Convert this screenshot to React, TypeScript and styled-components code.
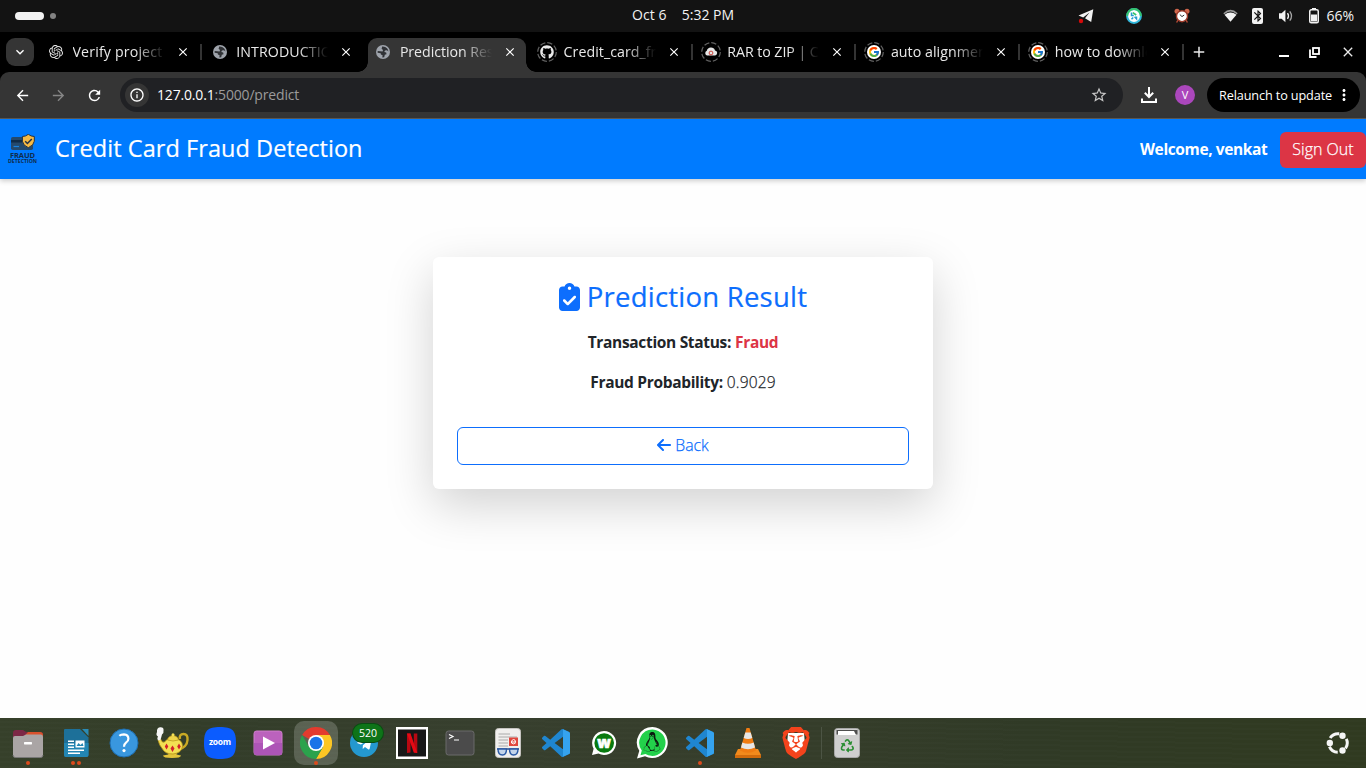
import React from "react";
import styled, { createGlobalStyle, css } from "styled-components";
import {
  MdArrowBack, MdArrowForward, MdRefresh, MdInfoOutline, MdStarBorder, MdClose, MdAdd,
  MdMoreVert, MdExpandMore, MdBluetooth,
} from "react-icons/md";
import { FaClipboardCheck, FaArrowLeft, FaGithub } from "react-icons/fa6";
import { FaTelegramPlane, FaLinux, FaRecycle } from "react-icons/fa";
import { FcGoogle } from "react-icons/fc";
import { SiOpenai, SiBrave } from "react-icons/si";

const GlobalStyle = createGlobalStyle`
  * { box-sizing: border-box; }
  body { margin: 0; background: #fefefe; font-family: "Open Sans", "Noto Sans", sans-serif; }
  svg { display: block; flex: none; }
  h1, h2, p { margin: 0; font-weight: 400; }
  button { font: inherit; margin: 0; }
`;

const Desktop = styled.div`
  width: 1366px;
  height: 768px;
  display: flex;
  flex-direction: column;
  overflow: hidden;
`;

/* ---------- system bar ---------- */
const SystemBar = styled.header`
  flex: none;
  height: 32px;
  background: #131313;
  color: #f2f2f2;
  display: grid;
  grid-template-columns: 632px auto 1fr;
  align-items: center;
`;
const Workspaces = styled.div`
  display: flex;
  align-items: center;
  gap: 6px;
  padding-left: 15px;
`;
const WorkspacePill = styled.span<{ $active?: boolean }>`
  width: ${(p) => (p.$active ? 29 : 6)}px;
  height: ${(p) => (p.$active ? 8 : 6)}px;
  border-radius: 4px;
  background: ${(p) => (p.$active ? "#f2f2f2" : "#828282")};
`;
const Label = styled.span<{ $size?: number; $track?: number; $weight?: number }>`
  font-size: ${(p) => p.$size ?? 14}px;
  letter-spacing: ${(p) => p.$track ?? 0}px;
  font-weight: ${(p) => p.$weight ?? 400};
  white-space: nowrap;
  line-height: 20px;
`;
const Clock = styled.div`
  display: flex;
  gap: 15px;
  margin-top: -2px;
`;
const Tray = styled.div`
  display: flex;
  align-items: center;
  justify-content: flex-end;
  padding-right: 12px;
`;
const TrayItem = styled.span<{ $gap: number }>`
  display: flex;
  margin-right: ${(p) => p.$gap}px;
`;
const BluetoothTile = styled.span`
  width: 11px;
  height: 16px;
  border-radius: 2px;
  background: #f2f2f2;
  color: #131313;
  display: flex;
  align-items: center;
  justify-content: center;
`;

/* ---------- browser ---------- */
const TabStrip = styled.nav`
  flex: none;
  height: 40px;
  background: #000;
  color: #e9e9e9;
  display: flex;
  align-items: flex-start;
  padding: 6px 0 0 6px;
`;
const TabSearch = styled.button`
  width: 28px;
  height: 28px;
  border: 0;
  padding: 0;
  border-radius: 9px;
  background: #353535;
  color: #fff;
  display: flex;
  align-items: center;
  justify-content: center;
  margin-right: 3px;
`;
const TabItem = styled.div<{ $active?: boolean; $sep?: boolean }>`
  position: relative;
  width: 163.7px;
  height: 34px;
  display: flex;
  align-items: center;
  padding: 0 0 6px 9px;
  ${(p) =>
    p.$sep &&
    css`
      &::after {
        content: "";
        position: absolute;
        right: -1px;
        top: 6px;
        width: 2px;
        height: 16px;
        background: #343434;
      }
    `}
  ${(p) =>
    p.$active &&
    css`
      &::before {
        content: "";
        position: absolute;
        inset: 0 2px 0 4px;
        background: #353535;
        border-radius: 9px 9px 0 0;
      }
    `}
`;
const TabFlare = styled.span<{ $side: "left" | "right" }>`
  position: absolute;
  bottom: 0;
  width: 10px;
  height: 10px;
  ${(p) => (p.$side === "left" ? "left: -6px;" : "right: -8px;")}
  background: radial-gradient(circle at ${(p) => (p.$side === "left" ? "0 0" : "100% 0")}, transparent 9.5px, #353535 10px);
`;
const Favicon = styled.span`
  position: relative;
  width: 20px;
  height: 20px;
  display: flex;
  align-items: center;
  justify-content: center;
`;
const LoadRing = styled.svg`
  position: absolute;
  inset: 0;
`;
const TabTitle = styled.span<{ $track: number }>`
  position: relative;
  margin-left: 6.500px;
  width: 92px;
  font-size: 14.2px;
  line-height: 20px;
  letter-spacing: ${(p) => p.$track}px;
  overflow: hidden;
  white-space: nowrap;
  mask-image: linear-gradient(90deg, #000 62px, transparent 92px);
`;
const TabClose = styled.span`
  position: relative;
  margin-left: 11px;
  display: flex;
  color: #fff;
`;
const NewTab = styled.span`
  display: flex;
  padding: 5px 0 0 7px;
`;
const WindowButtons = styled.div`
  margin-left: auto;
  display: flex;
  align-items: center;
  height: 28px;
  gap: 20px;
  padding-right: 10px;
`;

const ToolbarBack = styled.div`
  flex: none;
  background: #000;
`;
const Toolbar = styled.div`
  height: 47px;
  background: #353535;
  border-radius: 9px 9px 0 0;
  border-bottom: 1px solid #5c5a56;
  display: flex;
  align-items: center;
  padding: 0 6px 0 14px;
  color: #fff;
`;
const NavIcon = styled.span<{ $dim?: boolean }>`
  display: flex;
  width: 18px;
  margin-right: 18px;
  color: ${(p) => (p.$dim ? "#868686" : "#fff")};
`;
const AddressBar = styled.div`
  margin-left: -2px;
  width: 1003px;
  height: 34px;
  border-radius: 17px;
  background: #202124;
  display: flex;
  align-items: center;
  padding: 0 15px 0 5px;
`;
const SiteInfo = styled.span`
  width: 24px;
  height: 24px;
  border-radius: 50%;
  background: #353535;
  display: flex;
  align-items: center;
  justify-content: center;
  margin-right: 8px;
`;
const UrlPath = styled.span`
  color: #9b9b9b;
`;
const Bookmark = styled.span`
  margin-left: auto;
  display: flex;
  color: #c7c7c7;
`;
const Downloads = styled.span`
  display: flex;
  margin-left: 17px;
`;
const Avatar = styled.span`
  width: 20px;
  height: 20px;
  border-radius: 50%;
  background: #ab47bc;
  display: flex;
  align-items: center;
  justify-content: center;
  margin: 0 12px 0 17px;
`;
const Relaunch = styled.button`
  width: 153px;
  height: 34px;
  border: 0;
  border-radius: 17px;
  background: #000;
  color: #fff;
  display: flex;
  align-items: center;
  gap: 3px;
  padding: 0 0 0 12px;
`;

/* ---------- web page ---------- */
const AppHeader = styled.header`
  flex: none;
  position: relative;
  height: 60px;
  background: #007bff;
  box-shadow: 0 2px 5px rgba(0, 0, 0, 0.2);
  color: #fff;
  display: flex;
  align-items: center;
  padding-left: 7px;
`;
const AppTitle = styled.h1`
  margin-left: 17px;
  margin-bottom: 2px;
  font-size: 23.5px;
  line-height: 30px;
  letter-spacing: 0.06px;
  white-space: nowrap;
  -webkit-text-stroke: 0.2px;
`;
const Welcome = styled.span`
  margin-left: auto;
  width: 128px;
  margin-right: 12px;
  font-size: 15.5px;
  font-weight: 700;
  letter-spacing: -0.38px;
  white-space: nowrap;
`;
const SignOut = styled.button`
  width: 86px;
  height: 36px;
  margin-top: 1px;
  border: 0;
  padding: 0 0 1px;
  border-radius: 6px;
  background: #dc3545;
  color: #fff;
  font-size: 16px;
  font-weight: 300;
  -webkit-text-stroke: 0.25px;
  white-space: nowrap;
`;
const PageBody = styled.main`
  flex: 1;
  display: flex;
  flex-direction: column;
  align-items: center;
  padding-top: 78px;
`;
const Card = styled.section`
  width: 500px;
  height: 232px;
  padding: 23px 24px 24px;
  border-radius: 6px;
  background: #fff;
  box-shadow: 0 16px 48px rgba(0, 0, 0, 0.175);
  display: flex;
  flex-direction: column;
  align-items: center;
  color: #212529;
`;
const CardTitle = styled.h2`
  display: flex;
  align-items: center;
  gap: 7px;
  height: 34px;
  margin-bottom: 16px;
  color: #0d6efd;
  font-size: 27.5px;
  letter-spacing: 0.22px;
  line-height: 34px;
  white-space: nowrap;
  -webkit-text-stroke: 0.2px;
`;
const CardLine = styled.p`
  display: flex;
  gap: 4px;
  height: 24px;
  align-items: center;
  margin-bottom: 16px;
  font-size: 15.5px;
  white-space: nowrap;
`;
const Strong = styled.strong<{ $danger?: boolean }>`
  font-weight: 700;
  letter-spacing: -0.33px;
  color: ${(p) => (p.$danger ? "#dc3545" : "inherit")};
`;
const Value = styled.span`
  font-weight: 300;
  letter-spacing: 0.15px;
  -webkit-text-stroke: 0.25px;
`;
const BackButton = styled.button`
  margin-top: 17px;
  width: 100%;
  height: 38px;
  padding: 0 0 2px;
  border: 1px solid #0d6efd;
  border-radius: 6px;
  background: #fff;
  color: #0d6efd;
  display: flex;
  align-items: center;
  justify-content: center;
  gap: 4px;
  font-size: 15.8px;
  font-weight: 300;
  -webkit-text-stroke: 0.25px;
`;

/* ---------- dock ---------- */
const DockBar = styled.footer`
  flex: none;
  height: 50px;
  padding: 0 10px 0 4px;
  background:
    repeating-linear-gradient(1deg, rgba(255, 255, 255, 0.012) 0 2px, transparent 2px 5px),
    linear-gradient(90deg, #36402a 0, #333d29 15%, #373f2e 35%, #353d2a 60%, #303a26 75%, #303a20 100%);
  display: flex;
  align-items: center;
`;
const DockSlot = styled.div`
  position: relative;
  width: 48px;
  height: 50px;
  display: flex;
  align-items: center;
  justify-content: center;
`;
const DockTile = styled.span<{ $open?: boolean }>`
  width: 44px;
  height: 44px;
  border-radius: 10px;
  background: ${(p) => (p.$open ? "rgba(255,255,255,.19)" : "transparent")};
  display: flex;
  align-items: center;
  justify-content: center;
`;
const DockDots = styled.span`
  position: absolute;
  left: 0;
  right: 0;
  bottom: 3px;
  display: flex;
  justify-content: center;
  gap: 2px;
`;
const Dot = styled.i`
  width: 4px;
  height: 4px;
  border-radius: 50%;
  background: #dc4a1c;
`;
const Badge = styled.span`
  position: absolute;
  left: 13px;
  top: 6px;
  width: 30px;
  height: 18px;
  border-radius: 9px;
  background: #0e7418;
  box-shadow: 0 0 0 1px #0a4c12;
  color: #fff;
  font-size: 10.5px;
  line-height: 18px;
  text-align: center;
`;
const DockDivider = styled.span`
  width: 1px;
  height: 32px;
  margin: 0 1px;
  background: #4c5444;
`;
const DockEnd = styled.span`
  margin-left: auto;
  margin-right: 6px;
`;

/* ---------- drawings ---------- */
const Globe = () => (
  <svg width="14" height="14" viewBox="0 0 14 14">
    <circle cx="7" cy="7" r="7" fill="#9ea3ab" />
    <path d="M6.2 1.6Q9.200 1.400 11 3.200 12.300 4.800 12.400 6.500L11 5.200 9 5.500 8.300 7 10.200 7.500 10.500 9.300 8.800 9.700 8.200 12.200 6.300 12.400 6.600 10.300 4.900 9.600 4.700 8.200 1.600 7.700 1.700 6 4.300 6.300 6.600 6.500 7 5 5.600 3.800Z" fill="#303236" />
  </svg>
);
const CloudArchive = () => (
  <svg width="14" height="14" viewBox="0 0 14 14">
    <path d="M3 10.5A2.5 2.5 0 0 1 2.8 5.8 4.3 4.3 0 0 1 11 5.4 2.6 2.6 0 0 1 11.2 10.5Z" fill="#e6e6e6" />
    <circle cx="7" cy="8" r="1.900" fill="none" stroke="#c9433a" strokeWidth="1" />
  </svg>
);
const Ring = () => (
  <LoadRing width="20" height="20" viewBox="0 0 20 20">
    <circle cx="10" cy="10" r="9.3" fill="none" stroke="#616161" strokeWidth="1.2" strokeDasharray="5.3 2" />
  </LoadRing>
);
const GoogleDisc = () => (
  <svg width="14" height="14" viewBox="0 0 14 14">
    <circle cx="7" cy="7" r="7" fill="#fff" />
    <FcGoogle x="1" y="1" width="12" height="12" size={12} />
  </svg>
);

const BrandLogo = () => (
  <svg width="31" height="31" viewBox="0 0 31 31">
    <rect x="4" y="3" width="22" height="13" rx="1.8" fill="#24496d" />
    <path d="M4 6H26V8.500H4Z" fill="#102b47" />
    <path d="M6.500 12.500H12" stroke="#1783e0" strokeWidth="1.200" />
    <path d="M21.3.3Q24 2.500 27.3 2.500V7.200Q27 11.400 21.3 13.700 15.800 11.400 15.400 7.200V2.500Q18.700 2.500 21.300.3Z" fill="#f5b944" stroke="#223144" strokeWidth="1" />
    <path d="M18.200 7.200 20.400 9.500 24.800 4.900" fill="none" stroke="#223144" strokeWidth="1.500" />
    <text x="15.500" y="23.500" textAnchor="middle" textLength="25" fontSize="7.500" fontWeight="700" fill="#102c4c">FRAUD</text>
    <text x="15.500" y="29" textAnchor="middle" textLength="29" lengthAdjust="spacingAndGlyphs" fontSize="4.600" fontWeight="700" fill="#102c4c">DETECTION</text>
  </svg>
);

const TelegramTray = () => (
  <svg width="16" height="16" viewBox="0 0 16 16">
    <path d="M15.300 1.200.5 7.600 5.200 9.600 11.500 4.500 7 10.300 13.200 14Z" fill="#f2f2f2" />
    <circle cx="3" cy="13" r="2.200" fill="#d40b0b" />
  </svg>
);
const SyncTray = () => (
  <svg width="16" height="16" viewBox="0 0 16 16">
    <circle cx="8" cy="8" r="6.9" fill="#fff" stroke="#31b8dd" strokeWidth="2" />
    <path d="M1.1 8A6.9 6.9 0 0 1 8 1.1 6.9 6.9 0 0 1 14.9 8" fill="none" stroke="#35c46c" strokeWidth="2" />
    <path d="M5.500 4.500V7.500H7.800M5.500 11.300 7.200 9.500M8.600 8.700 10.500 10.800V8.500" fill="none" stroke="#239ccf" strokeWidth="1.500" />
    <path d="M6.800 4.600 10.200 7" stroke="#35c46c" strokeWidth="1.700" />
  </svg>
);
const AlarmTray = () => (
  <svg width="16" height="16" viewBox="0 0 16 16">
    <circle cx="3" cy="3.2" r="2.5" fill="#d0664c" />
    <circle cx="13" cy="3.2" r="2.5" fill="#d0664c" />
    <path d="M4 12 2.6 14.5M12 12 13.4 14.5" stroke="#b04a35" strokeWidth="1.5" />
    <circle cx="8" cy="8.2" r="5.5" fill="#fff" stroke="#9d3a29" strokeWidth="1.4" />
    <path d="M5.8 6.5 8 8.6 10.2 7" fill="none" stroke="#333" strokeWidth="1" />
  </svg>
);
const Wifi = () => (
  <svg width="15" height="14" viewBox="0 0 15 14">
    <path d="M.8 4.8Q7.5-1.5 14.2 4.8" fill="none" stroke="#999" strokeWidth="1.5" />
    <path d="M1.500 5.800Q7.500 1.200 13.500 5.800L7.500 12.800Z" fill="#f2f2f2" />
  </svg>
);
const Speaker = () => (
  <svg width="16" height="16" viewBox="0 0 16 16">
    <path d="M1 5.3H3.6L7.4 1.8V14.2L3.6 10.7H1Z" fill="#f2f2f2" />
    <path d="M9.5 5.2Q11.5 8 9.5 10.8" fill="none" stroke="#f2f2f2" strokeWidth="1.3" />
    <path d="M11.8 3.3Q15.2 8 11.8 12.7" fill="none" stroke="#a5a5a5" strokeWidth="1.3" />
  </svg>
);
const Battery = () => (
  <svg width="10" height="16" viewBox="0 0 10 16">
    <path d="M3 0H7V2H3Z" fill="#f2f2f2" />
    <rect x=".75" y="1.75" width="8.5" height="13" rx="1.5" fill="none" stroke="#f2f2f2" strokeWidth="1.5" />
    <path d="M2 6.5H8V13.5H2Z" fill="#f2f2f2" />
  </svg>
);
const MinimizeGlyph = () => (
  <svg width="10" height="12" viewBox="0 0 10 12"><path d="M0 10H10" stroke="#fff" strokeWidth="2" /></svg>
);
const RestoreGlyph = () => (
  <svg width="11" height="11" viewBox="0 0 11 11" fill="none" stroke="#fff">
    <rect x="4" y="1" width="6" height="6" strokeWidth="1.8" />
    <path d="M1 2.5V10H7.5" strokeWidth="1.8" />
  </svg>
);
const DownloadGlyph = () => (
  <svg width="18" height="18" viewBox="0 0 18 18" fill="none" stroke="#fff" strokeWidth="2">
    <path d="M9 1V10.5M4.8 6.8 9 11 13.2 6.8M2 12.5V16H16V12.5" />
  </svg>
);

const Files = () => (
  <svg width="32" height="32" viewBox="0 0 32 32">
    <path d="M1 6Q1 3 4 3H11L14 5H28Q31 5 31 8V16H1Z" fill="#7c2846" />
    <path d="M16 5H28Q31 5 31 8V14H8Z" fill="#d9512c" />
    <path d="M1 11Q1 9 3 9H11L14 7.5H29Q31 7.5 31 10V28Q31 30.5 28.5 30.5H3.5Q1 30.5 1 28Z" fill="#aaa5a5" />
    <path d="M1 28Q1 30.5 3.5 30.5H28.5Q31 30.5 31 28" fill="none" stroke="#777" />
    <rect x="12" y="15" width="8" height="2.4" rx=".6" fill="#fff" />
  </svg>
);
const Writer = () => (
  <svg width="32" height="32" viewBox="0 0 32 32">
    <path d="M5 2H20L28.500 10.500V28Q28.500 30 26.500 30H6Q4 30 4 28V3Q4 2 5 2Z" fill="#1d7099" />
    <path d="M4 16H28.500V28Q28.500 30 26.500 30H6Q4 30 4 28Z" fill="#2386b3" />
    <path d="M22 2H28.500V9Z" fill="#2a8ab5" />
    <path d="M8 14.2H14M8 17.2H14M8 20.2H14M8 23.2H24M8 26.2H20" stroke="#fff" strokeWidth="1.4" />
    <rect x="15.5" y="13.5" width="9" height="7" fill="#fff" />
    <path d="M16.5 19 18.5 16 20.5 18 22.5 16 23.5 19Z" fill="#2386b3" />
  </svg>
);
const Help = () => (
  <svg width="30" height="30" viewBox="0 0 30 30">
    <circle cx="15" cy="15" r="14" fill="#3997df" stroke="#1e6eb0" />
    <path d="M10.3 7.800Q12 6.300 15 6.300 19.400 6.500 19.400 10.700 19.400 13 17 14.700 15 16.200 15 18.800" fill="none" stroke="#fff" strokeWidth="2.200" />
    <circle cx="15" cy="22.600" r="1.600" fill="#fff" />
  </svg>
);
const Teapot = () => (
  <svg width="34" height="32" viewBox="0 0 34 32">
    <path d="M25 12Q24 7 28.500 7 33 7 32.500 13 32 20 24 22.500" fill="none" stroke="#c9a924" strokeWidth="2.400" />
    <path d="M12 25H22L21.500 27.500 26 28.500Q26 31 17 31 8 31 8 28.500L13.500 27.500Z" fill="#e3c43a" />
    <path d="M3 13 6 12.500Q7 16 9.500 15L12 12.500Q15 11 18 11 27.500 12 27.500 19 27 26 18 27 10 27 7.500 22 4 18 3 13Z" fill="#f3df53" stroke="#b59217" strokeWidth=".8" />
    <path d="M12.500 13Q13 9 18 8.500 23 9 23.500 13 18 15 12.500 13Z" fill="#eed44a" stroke="#b59217" strokeWidth=".7" />
    <circle cx="18" cy="7.800" r="1.500" fill="#f3df53" />
    <path d="M11.500 16.500 13.300 19.500 11.500 22.500 9.800 19.500ZM17.500 18.500 19.500 21.500 17.500 25 15.500 21.500ZM24 16.500 25.800 19.500 24 22.500 22.200 19.500Z" fill="#d3202b" />
    <path d="M3.500 13.500Q1.500 12 3 9.500 .5 8 2 5 1.500 1 5 .3 9 0 8.500 3.500 9 6 7 7.500 6.500 9.500 5.500 13Z" fill="#f6f6f6" />
  </svg>
);
const Zoom = () => (
  <svg width="32" height="32" viewBox="0 0 32 32">
    <path d="M16 0C28.500 0 32 3.500 32 16S28.500 32 16 32 0 28.500 0 16 3.500 0 16 0Z" fill="#0b5cff" />
    <text x="16" y="18.200" textAnchor="middle" textLength="22" fontSize="8.500" fontWeight="700" fill="#fff">zoom</text>
  </svg>
);
const Player = () => (
  <svg width="30" height="26" viewBox="0 0 30 26">
    <rect x="1" y="1" width="28" height="24" rx="2.500" fill="#bb62bd" stroke="#d07fcc" />
    <path d="M1 13H29V23Q29 25 27 25H3Q1 25 1 23Z" fill="#ad55b6" />
    <path d="M10 6.500 22 13 10 19.500Z" fill="#fff" />
  </svg>
);
const Chrome = () => (
  <svg width="32" height="32" viewBox="0 0 32 32">
    <path d="M16 16 2.140 8A16 16 0 0 1 29.860 8Z" fill="#e33b2e" />
    <path d="M16 8H29.860A16 16 0 0 1 16 32L22.930 20Z" fill="#fcc624" />
    <path d="M2.140 8A16 16 0 0 0 16 32L22.930 20 9.070 20Z" fill="#2ba24c" />
    <circle cx="16" cy="16" r="8" fill="#fff" />
    <circle cx="16" cy="16" r="6.300" fill="#1a73e8" />
  </svg>
);
const TelegramDisc = styled.span`
  width: 28px;
  height: 28px;
  border-radius: 50%;
  background: #2498cf;
  color: #fff;
  display: flex;
  align-items: center;
  justify-content: center;
`;
const Netflix = () => (
  <svg width="32" height="32" viewBox="0 0 32 32">
    <path d="M0 0H32V32H0Z" fill="#fff" />
    <path d="M2 2.500H30V29.500H2Z" fill="#171717" />
    <path d="M11 6.500H14.500V25.500L11 26ZM17.800 6.500H21.300V26L17.800 25.500Z" fill="#b80812" />
    <path d="M11 6.500H14.500L21.300 26 17.800 25.500Z" fill="#e50914" />
  </svg>
);
const Terminal = () => (
  <svg width="30" height="26" viewBox="0 0 30 26">
    <rect x="1" y="1" width="28" height="24" rx="2.500" fill="#4b4b4b" stroke="#6b6b6b" />
    <path d="M4 4.500 8 6.500 4 8.500M9 10H14" fill="none" stroke="#fff" strokeWidth="1.200" />
  </svg>
);
const Reader = () => (
  <svg width="26" height="30" viewBox="0 0 26 30">
    <rect x=".500" y=".500" width="25" height="29" rx="3" fill="#f0efed" stroke="#c6c4c1" />
    <path d="M3.500 6H15M3.500 9H22M3.500 12H13M3.500 15H13M3.500 18H13" stroke="#aaa" strokeWidth="1" />
    <rect x="14" y="9.500" width="9" height="8.500" fill="#e0483e" />
    <path d="M16 14H20.500Q20.500 11.500 18.500 11.500 16 12 16.500 15 18.500 17 21 14.500" fill="none" stroke="#fff" />
    <path d="M2 21H24" stroke="#274e8d" strokeWidth="1.500" />
    <path d="M3 21H11.500Q11.500 27 7.500 27 3 27 3 21ZM14.500 21H23Q23 27 18.500 27 14.500 27 14.500 21Z" fill="#c3d4ea" stroke="#2b5aa5" strokeWidth="1.400" />
  </svg>
);
const Code = () => (
  <svg width="28" height="28" viewBox="0 0 24 24">
    <path
      fill="#1f86d0"
      fillRule="evenodd"
      d="M23.150 2.587L18.210.210a1.494 1.494 0 0 0-1.705.290l-9.460 8.630-4.120-3.128a.999.999 0 0 0-1.276.057L.327 7.261A1 1 0 0 0 .326 8.740L3.899 12 .326 15.260a1 1 0 0 0 .001 1.479L1.650 17.940a.999.999 0 0 0 1.276.057l4.120-3.128 9.460 8.630a1.492 1.492 0 0 0 1.704.290l4.942-2.377A1.500 1.500 0 0 0 24 20.060V3.939a1.500 1.500 0 0 0-.850-1.352zm-5.146 14.861L10.826 12l7.178-5.448v10.896z"
    />
    <path fill="#35a3ef" d="M18.004.150 23.150 2.587A1.500 1.500 0 0 1 24 3.939V20.060A1.500 1.500 0 0 1 23.150 21.410L18.004 23.850Z" />
  </svg>
);
const WebChat = () => (
  <svg width="26" height="26" viewBox="0 0 26 26">
    <path d="M13 1A12 12 0 1 1 7.500 23.600L1 25 2.600 18.800A12 12 0 0 1 13 1Z" fill="#fff" />
    <circle cx="13.200" cy="13" r="9.800" fill="#087a0f" />
    <text x="13.200" y="17.500" textAnchor="middle" fontSize="15" fontWeight="800" fill="#fff" stroke="#fff" strokeWidth=".6">w</text>
  </svg>
);
const TuxChat = () => (
  <svg width="32" height="32" viewBox="0 0 32 32">
    <path d="M16.500 0A15.500 15.500 0 1 1 9 29.200L1 31.500 3.300 23.800A15.500 15.500 0 0 1 16.500 0Z" fill="#fff" />
    <path d="M16.500 2.500A13.200 13.200 0 1 1 9.500 27L4.500 28.200 5.800 23.500A13.200 13.200 0 0 1 16.500 2.500Z" fill="#23d14b" />
    <FaLinux x="6" y="5" size={20} color="#0c1a10" />
  </svg>
);
const Cone = () => (
  <svg width="28" height="30" viewBox="0 0 28 30">
    <path d="M4 21H24L27 27V30H1V27Z" fill="#f28a1c" />
    <path d="M1 27H27V30H1Z" fill="#d16b0c" />
    <path d="M12.500 0H15.500L22 22.500Q14 27 6 22.500Z" fill="#f07c12" />
    <path d="M11.300 4.500H16.700L18.300 10Q14 12 9.700 10ZM8.300 14.500Q14 17 19.700 14.500L21 19.500Q14 23 7 19.500Z" fill="#e6e6e6" />
  </svg>
);
const Brave = () => (
  <svg width="28" height="32" viewBox="0 0 28 32">
    <path d="M6 6H22L23 18 14 27 5 18Z" fill="#fff" />
    <SiBrave x="-2" y="0" size={32} color="#f4431c" />
  </svg>
);
const Trash = () => (
  <svg width="26" height="30" viewBox="0 0 26 30">
    <rect x=".500" y=".500" width="25" height="29" rx="3" fill="#cfcfcf" stroke="#a8a8a8" />
    <path d="M2.500 2H23.500V6.500H2.500Z" fill="#4f4f4f" />
    <path d="M4 3H20L22 7H4Z" fill="#fff" />
    <FaRecycle x="6.500" y="11" size={13.500} color="#2b8f34" />
  </svg>
);
const ShowApps = () => (
  <svg width="24" height="24" viewBox="0 0 24 24">
    <circle cx="12" cy="12" r="9.300" fill="none" stroke="#f5f5f5" strokeWidth="3" strokeDasharray="10.500 8.980" strokeDashoffset="-14.800" />
    <circle cx="3.800" cy="12" r="3.200" fill="#f5f5f5" />
    <circle cx="16.500" cy="4.700" r="3.200" fill="#f5f5f5" />
    <circle cx="16.500" cy="19.500" r="3.200" fill="#f5f5f5" />
  </svg>
);

const tabs = [
  { title: "Verify project", icon: <SiOpenai size={14} />, track: 0.15, sep: true },
  { title: "INTRODUCTION", icon: <Globe />, track: 0.1 },
  { title: "Prediction Result", icon: <Globe />, track: -0.05, active: true },
  { title: "Credit_card_fraud", icon: <FaGithub size={14} />, track: 0.05, loading: true, sep: true },
  { title: "RAR to ZIP | Cloud", icon: <CloudArchive />, track: -0.05, loading: true, sep: true },
  { title: "auto alignment", icon: <GoogleDisc />, track: 0.05, loading: true, sep: true },
  { title: "how to download", icon: <GoogleDisc />, track: 0.05, loading: true, sep: true },
];

const dockApps: { icon: React.ReactNode; dots?: number; open?: boolean; badge?: string }[] = [
  { icon: <Files />, dots: 1 },
  { icon: <Writer />, dots: 2 },
  { icon: <Help /> },
  { icon: <Teapot /> },
  { icon: <Zoom /> },
  { icon: <Player /> },
  { icon: <Chrome />, dots: 1, open: true },
  { icon: <TelegramDisc><FaTelegramPlane size={17} /></TelegramDisc>, badge: "520" },
  { icon: <Netflix /> },
  { icon: <Terminal /> },
  { icon: <Reader /> },
  { icon: <Code /> },
  { icon: <WebChat /> },
  { icon: <TuxChat /> },
  { icon: <Code />, dots: 1 },
  { icon: <Cone /> },
  { icon: <Brave /> },
];

const DockItem = ({ icon, dots = 0, open, badge }: (typeof dockApps)[number]) => (
  <DockSlot>
    <DockTile $open={open}>{icon}</DockTile>
    {badge && <Badge>{badge}</Badge>}
    <DockDots>{Array.from({ length: dots }, (_, i) => <Dot key={i} />)}</DockDots>
  </DockSlot>
);

export default function App() {
  return (
    <Desktop>
      <GlobalStyle />
      <SystemBar>
        <Workspaces>
          <WorkspacePill $active />
          <WorkspacePill />
        </Workspaces>
        <Clock>
          <Label $track={0.1}>Oct 6</Label>
          <Label>5:32 PM</Label>
        </Clock>
        <Tray>
          <TrayItem $gap={32}><TelegramTray /></TrayItem>
          <TrayItem $gap={32}><SyncTray /></TrayItem>
          <TrayItem $gap={33}><AlarmTray /></TrayItem>
          <TrayItem $gap={14}><Wifi /></TrayItem>
          <TrayItem $gap={15}><BluetoothTile><MdBluetooth size={14} /></BluetoothTile></TrayItem>
          <TrayItem $gap={15}><Speaker /></TrayItem>
          <TrayItem $gap={7}><Battery /></TrayItem>
          <Label>66%</Label>
        </Tray>
      </SystemBar>

      <TabStrip>
        <TabSearch><MdExpandMore size={16} /></TabSearch>
        {tabs.map((t) => (
          <TabItem key={t.title} $active={t.active} $sep={t.sep}>
            {t.active && <TabFlare $side="left" />}
            {t.active && <TabFlare $side="right" />}
            <Favicon>
              {t.loading && <Ring />}
              {t.icon}
            </Favicon>
            <TabTitle $track={t.track}>{t.title}</TabTitle>
            <TabClose><MdClose size={14} /></TabClose>
          </TabItem>
        ))}
        <NewTab><MdAdd size={18} /></NewTab>
        <WindowButtons>
          <MinimizeGlyph />
          <RestoreGlyph />
          <MdClose size={16} />
        </WindowButtons>
      </TabStrip>

      <ToolbarBack>
        <Toolbar>
          <NavIcon><MdArrowBack size={17} /></NavIcon>
          <NavIcon $dim><MdArrowForward size={17} /></NavIcon>
          <NavIcon><MdRefresh size={17} /></NavIcon>
          <AddressBar>
            <SiteInfo><MdInfoOutline size={16} /></SiteInfo>
            <Label $track={-0.17}>127.0.0.1<UrlPath>:5000/predict</UrlPath></Label>
            <Bookmark><MdStarBorder size={18} /></Bookmark>
          </AddressBar>
          <Downloads><DownloadGlyph /></Downloads>
          <Avatar><Label $size={11}>V</Label></Avatar>
          <Relaunch>
            <Label $size={12.7} $track={-0.13}>Relaunch to update</Label>
            <MdMoreVert size={18} />
          </Relaunch>
        </Toolbar>
      </ToolbarBack>

      <AppHeader>
        <BrandLogo />
        <AppTitle>Credit Card Fraud Detection</AppTitle>
        <Welcome>Welcome, venkat</Welcome>
        <SignOut>Sign Out</SignOut>
      </AppHeader>

      <PageBody>
        <Card>
          <CardTitle>
            <FaClipboardCheck size={28} style={{ width: 21 }} />
            Prediction Result
          </CardTitle>
          <CardLine>
            <Strong>Transaction Status:</Strong>
            <Strong $danger>Fraud</Strong>
          </CardLine>
          <CardLine>
            <Strong>Fraud Probability:</Strong>
            <Value>0.9029</Value>
          </CardLine>
          <BackButton>
            <FaArrowLeft size={16} style={{ width: 14 }} />
            Back
          </BackButton>
        </Card>
      </PageBody>

      <DockBar>
        {dockApps.map((app, i) => <DockItem key={i} {...app} />)}
        <DockDivider />
        <DockSlot><Trash /></DockSlot>
        <DockEnd><ShowApps /></DockEnd>
      </DockBar>
    </Desktop>
  );
}
